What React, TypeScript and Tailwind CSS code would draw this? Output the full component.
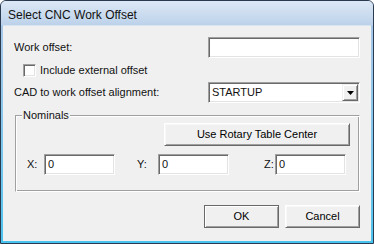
import React from "react";

const font = { fontFamily: '"Liberation Sans", Arial, sans-serif' };

function Sunken({ className = "", children }: { className?: string; children?: React.ReactNode }) {
  return (
    <div
      className={
        "bg-white border border-t-[#a0a0a0] border-l-[#a0a0a0] border-b-[#ffffff] border-r-[#ffffff] shadow-[inset_1px_1px_0_#696969,inset_-1px_-1px_0_#e3e3e3] flex items-center " +
        className
      }
    >
      {children}
    </div>
  );
}

function Btn({ className = "", children, def = false }: { className?: string; children?: React.ReactNode; def?: boolean }) {
  return (
    <div
      className={
        "flex items-center justify-center bg-[#f0f0f0] text-[11px] text-black border " +
        (def
          ? "border-[#696969] shadow-[inset_1px_1px_0_#ffffff,inset_-1px_-1px_0_#a0a0a0] "
          : "border-t-[#ffffff] border-l-[#ffffff] border-b-[#696969] border-r-[#696969] shadow-[inset_1px_1px_0_#f8f8f8,inset_-1px_-1px_0_#a0a0a0] ") +
        className
      }
    >
      {children}
    </div>
  );
}

export default function App() {
  return (
    <div style={font} className="w-[374px] h-[244px] flex flex-col border border-[#2b3b4f] rounded-t-[6px] overflow-hidden bg-[#a9c8ea] text-black">
      {/* title bar */}
      <div className="h-[24px] shrink-0 bg-gradient-to-b from-[#dde8f5] to-[#bcd2ea] flex items-center pl-[7px] pt-[3px]">
        <span className="text-[12px] leading-none text-[#111]">Select CNC Work Offset</span>
      </div>
      {/* client */}
      <div className="flex-1 flex px-[2px] pb-[2px] bg-gradient-to-b from-[#a9c8ea] to-[#48c3ee]">
        <div className="flex-1 bg-[#f0f0f0] border-t border-t-[#d9e4f1] px-[11px] pt-[11px] flex flex-col text-[11px] text-[#111]">
          {/* row 1 */}
          <div className="flex items-center justify-between h-[21px]">
            <span>Work offset:</span>
            <Sunken className="w-[152px] h-[21px]" />
          </div>
          {/* row 2 */}
          <div className="flex items-center h-[13px] mt-[6px] pl-[9px]">
            <Sunken className="w-[13px] h-[13px]" />
            <span className="ml-[4px]">Include external offset</span>
          </div>
          {/* row 3 */}
          <div className="flex items-center justify-between h-[21px] mt-[5px]">
            <span>CAD to work offset alignment:</span>
            <Sunken className="w-[152px] h-[21px] justify-between pl-[3px] pr-[1px]">
              <span className="leading-none">STARTUP</span>
              <div className="w-[16px] h-[17px] bg-[#f0f0f0] border border-t-[#f0f0f0] border-l-[#f0f0f0] border-b-[#696969] border-r-[#696969] shadow-[inset_1px_1px_0_#ffffff,inset_-1px_-1px_0_#a0a0a0] flex items-center justify-center">
                <svg width="7" height="4" viewBox="0 0 7 4">
                  <path d="M0 0 H7 L3.5 4 Z" fill="#000" />
                </svg>
              </div>
            </Sunken>
          </div>
          {/* group box */}
          <div className="relative mt-[12px] ml-[1px] h-[77px] border border-t-[#a0a0a0] border-l-[#a0a0a0] border-b-[#ffffff] border-r-[#ffffff] shadow-[inset_1px_1px_0_#ffffff,inset_-1px_-1px_0_#a0a0a0] flex flex-col">
            <span className="absolute left-[6px] top-[-7px] bg-[#f0f0f0] px-[1px] leading-[13px]">Nominals</span>
            <div className="flex justify-end pr-[9px] mt-[7px]">
              <Btn className="w-[186px] h-[23px]">Use Rotary Table Center</Btn>
            </div>
            <div className="flex items-center mt-[8px] pl-[11px]">
              <span className="w-[17px]">X:</span>
              <Sunken className="w-[71px] h-[21px] pl-[3px]">
                <span>0</span>
              </Sunken>
              <span className="w-[21px] ml-[22px]">Y:</span>
              <Sunken className="w-[71px] h-[21px] pl-[3px]">
                <span>0</span>
              </Sunken>
              <span className="w-[11px] ml-[35px]">Z:</span>
              <Sunken className="w-[71px] h-[21px] pl-[3px]">
                <span>0</span>
              </Sunken>
            </div>
          </div>
          {/* buttons */}
          <div className="flex justify-end gap-[6px] mt-[13px]">
            <Btn def className="w-[75px] h-[23px]">OK</Btn>
            <Btn className="w-[75px] h-[23px]">Cancel</Btn>
          </div>
        </div>
      </div>
    </div>
  );
}
